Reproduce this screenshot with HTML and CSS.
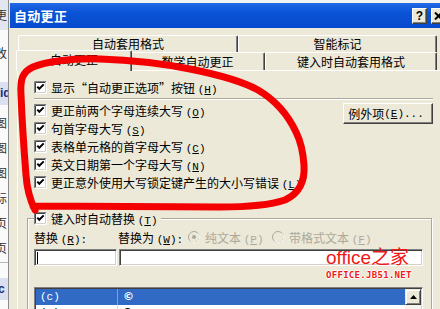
FILE: index.html
```html
<!DOCTYPE html>
<html lang="zh-CN">
<head>
<meta charset="utf-8">
<title>自动更正</title>
<link rel="stylesheet" href="styles.css">
</head>
<body>
<div class="strip">
  <div class="si band-top">更</div>
  <div class="si s2">改</div>
  <div class="si band">id</div>
  <div class="si s-first">图</div>
  <div class="si">图</div>
  <div class="si">图</div>
  <div class="si">标</div>
  <div class="si">页</div>
  <div class="si">页</div>
  <div class="sline"></div>
  <div class="si band band-low">c</div>
</div>

<div class="dialog">
  <div class="titlebar">
    <div class="title">自动更正</div>
    <div class="tbtn">?</div>
    <div class="tbtn"><svg width="9" height="8" viewBox="0 0 9 8"><path d="M1 0.5L8 7.5M8 0.5L1 7.5" stroke="#000" stroke-width="2"/></svg></div>
  </div>
  <div class="dbody">
    <div class="tabs-back">
      <div class="tab w220">自动套用格式</div>
      <div class="tab w199">智能标记</div>
    </div>
    <div class="tabs-front">
      <div class="tab sel">自动更正</div>
      <div class="tab w135">数学自动更正</div>
      <div class="tab w172">键入时自动套用格式</div>
    </div>
    <div class="panel">
      <div class="row">
        <svg class="cb" width="13" height="13" viewBox="0 0 13 13"><rect x="1" y="1" width="11" height="11" fill="#fff"/><path d="M0.5 12.5V0.5H12.5" stroke="#808080" fill="none"/><path d="M1.5 11.5V1.5H11.5" stroke="#404040" fill="none"/><path d="M0.5 12.5H12.5V0.5" stroke="#fff" fill="none"/><path d="M1.5 11.5H11.5V1.5" stroke="#d4d0c8" fill="none"/><path d="M3.3 5.6L5.3 7.8L9.7 3.4" stroke="#000" stroke-width="2" fill="none"/></svg>
        <span>显示“自动更正选项”按钮 <span class="k">(<u>H</u>)</span></span>
      </div>
      <div class="sep"></div>
      <div class="opts">
        <div class="checklist">
          <div class="row">
            <svg class="cb" width="13" height="13" viewBox="0 0 13 13"><rect x="1" y="1" width="11" height="11" fill="#fff"/><path d="M0.5 12.5V0.5H12.5" stroke="#808080" fill="none"/><path d="M1.5 11.5V1.5H11.5" stroke="#404040" fill="none"/><path d="M0.5 12.5H12.5V0.5" stroke="#fff" fill="none"/><path d="M1.5 11.5H11.5V1.5" stroke="#d4d0c8" fill="none"/><path d="M3.3 5.6L5.3 7.8L9.7 3.4" stroke="#000" stroke-width="2" fill="none"/></svg>
            <span>更正前两个字母连续大写 <span class="k">(<u>O</u>)</span></span>
          </div>
          <div class="row">
            <svg class="cb" width="13" height="13" viewBox="0 0 13 13"><rect x="1" y="1" width="11" height="11" fill="#fff"/><path d="M0.5 12.5V0.5H12.5" stroke="#808080" fill="none"/><path d="M1.5 11.5V1.5H11.5" stroke="#404040" fill="none"/><path d="M0.5 12.5H12.5V0.5" stroke="#fff" fill="none"/><path d="M1.5 11.5H11.5V1.5" stroke="#d4d0c8" fill="none"/><path d="M3.3 5.6L5.3 7.8L9.7 3.4" stroke="#000" stroke-width="2" fill="none"/></svg>
            <span>句首字母大写 <span class="k">(<u>S</u>)</span></span>
          </div>
          <div class="row">
            <svg class="cb" width="13" height="13" viewBox="0 0 13 13"><rect x="1" y="1" width="11" height="11" fill="#fff"/><path d="M0.5 12.5V0.5H12.5" stroke="#808080" fill="none"/><path d="M1.5 11.5V1.5H11.5" stroke="#404040" fill="none"/><path d="M0.5 12.5H12.5V0.5" stroke="#fff" fill="none"/><path d="M1.5 11.5H11.5V1.5" stroke="#d4d0c8" fill="none"/><path d="M3.3 5.6L5.3 7.8L9.7 3.4" stroke="#000" stroke-width="2" fill="none"/></svg>
            <span>表格单元格的首字母大写 <span class="k">(<u>C</u>)</span></span>
          </div>
          <div class="row">
            <svg class="cb" width="13" height="13" viewBox="0 0 13 13"><rect x="1" y="1" width="11" height="11" fill="#fff"/><path d="M0.5 12.5V0.5H12.5" stroke="#808080" fill="none"/><path d="M1.5 11.5V1.5H11.5" stroke="#404040" fill="none"/><path d="M0.5 12.5H12.5V0.5" stroke="#fff" fill="none"/><path d="M1.5 11.5H11.5V1.5" stroke="#d4d0c8" fill="none"/><path d="M3.3 5.6L5.3 7.8L9.7 3.4" stroke="#000" stroke-width="2" fill="none"/></svg>
            <span>英文日期第一个字母大写 <span class="k">(<u>N</u>)</span></span>
          </div>
          <div class="row">
            <svg class="cb" width="13" height="13" viewBox="0 0 13 13"><rect x="1" y="1" width="11" height="11" fill="#fff"/><path d="M0.5 12.5V0.5H12.5" stroke="#808080" fill="none"/><path d="M1.5 11.5V1.5H11.5" stroke="#404040" fill="none"/><path d="M0.5 12.5H12.5V0.5" stroke="#fff" fill="none"/><path d="M1.5 11.5H11.5V1.5" stroke="#d4d0c8" fill="none"/><path d="M3.3 5.6L5.3 7.8L9.7 3.4" stroke="#000" stroke-width="2" fill="none"/></svg>
            <span>更正意外使用大写锁定键产生的大小写错误 <span class="k">(<u>L</u>)</span></span>
          </div>
        </div>
        <div class="btn">例外项 <span class="k">(<u>E</u>)...</span></div>
      </div>

      <fieldset class="group">
        <legend class="legend">
          <svg class="cb" width="13" height="13" viewBox="0 0 13 13"><rect x="1" y="1" width="11" height="11" fill="#fff"/><path d="M0.5 12.5V0.5H12.5" stroke="#808080" fill="none"/><path d="M1.5 11.5V1.5H11.5" stroke="#404040" fill="none"/><path d="M0.5 12.5H12.5V0.5" stroke="#fff" fill="none"/><path d="M1.5 11.5H11.5V1.5" stroke="#d4d0c8" fill="none"/><path d="M3.3 5.6L5.3 7.8L9.7 3.4" stroke="#000" stroke-width="2" fill="none"/></svg>
          <span>键入时自动替换 <span class="k">(<u>T</u>)</span></span>
        </legend>
        <div class="labels">
          <span class="lbl1">替换 <span class="k">(<u>R</u>):</span></span>
          <span class="lbl2">替换为 <span class="k">(<u>W</u>):</span></span>
          <span class="rgrp dis">
            <svg width="12" height="12" viewBox="0 0 12 12"><circle cx="6" cy="6" r="5.5" fill="#ece9d8" stroke="#aca899"/><path d="M10 2.5A5 5 0 0 1 2.5 10" stroke="#fff" fill="none"/><circle cx="6" cy="6" r="2" fill="#aca899"/></svg>
            <span>纯文本 <span class="k">(<u>P</u>)</span></span>
          </span>
          <span class="rgrp dis">
            <svg width="12" height="12" viewBox="0 0 12 12"><circle cx="6" cy="6" r="5.5" fill="#ece9d8" stroke="#aca899"/><path d="M10 2.5A5 5 0 0 1 2.5 10" stroke="#fff" fill="none"/></svg>
            <span>带格式文本 <span class="k">(<u>F</u>)</span></span>
          </span>
        </div>
        <div class="inputs">
          <div class="inp w83"><span class="caret"></span></div>
          <div class="inp grow"></div>
        </div>
        <div class="list">
          <div class="lrows">
            <div class="lrow selrow"><span class="c1">(c)</span><span class="c2">©</span></div>
            <div class="lrow"><span class="c1">(e)</span><span class="c2">€</span></div>
            <div class="lrow"><span class="c1">(r)</span><span class="c2">®</span></div>
          </div>
          <div class="scroll">
            <div class="sbtn"><svg width="7" height="4" viewBox="0 0 7 4"><path d="M3.5 0L7 4H0Z" fill="#000"/></svg></div>
            <div class="strack"></div>
          </div>
        </div>
      </fieldset>
    </div>
  </div>
</div>

<div class="wm">
  <div class="wm-main">office之家</div>
  <div class="wm-sub">OFFICE.JB51.NET</div>
</div>

<svg class="ink" width="440" height="309" viewBox="0 0 440 309">
  <path d="M 35 210 C 30 200, 27 190, 26 175 C 24 150, 22 120, 21 95 C 20 80, 22 72, 33 67 C 45 62, 70 58, 100 59 C 130 60, 160 63, 190 69 C 215 74, 240 80, 258 90 C 275 100, 288 115, 296 132 C 300 140, 303 150, 304 165 C 305 180, 300 193, 285 200 C 270 205, 250 207, 220 207 L 33 206" fill="none" stroke="#f40000" stroke-width="7" stroke-linecap="round" stroke-linejoin="round"/>
</svg>
</body>
</html>
```

FILE: styles.css
```css
html, body {
  margin: 0;
  padding: 0;
}
body {
  width: 440px;
  height: 309px;
  overflow: hidden;
  position: relative;
  display: flex;
  align-items: flex-start;
  background: #f3f3f3;
  font-family: "Noto Sans CJK SC", sans-serif;
  font-size: 12px;
  color: #000;
}

/* background window strip */
.strip {
  flex: none;
  width: 8px;
  height: 309px;
  overflow: hidden;
  border-right: 1px solid #8c8c8c;
  background: #fafafa;
  display: flex;
  flex-direction: column;
}
.si {
  flex: none;
  height: 25px;
  line-height: 25px;
  margin-left: -5px;
  white-space: nowrap;
  color: #333;
  font-size: 12px;
}
.band-top {
  height: 30px;
  line-height: 30px;
  background: #e3e6ee;
  padding-left: 0;
}
.s2 {
  margin-top: 14px;
  height: 18px;
  line-height: 18px;
}
.band {
  margin-top: 20px;
  margin-left: 0;
  height: 23px;
  line-height: 23px;
  background: #dbe0f1;
  color: #1c2f7a;
  font-weight: 700;
  font-family: "Liberation Sans", sans-serif;
}
.s-first {
  margin-top: 5px;
}
.sline {
  flex: none;
  margin-top: 2px;
  height: 1px;
  background: #b8b8b8;
}
.band-low {
  margin-top: 15px;
  height: 22px;
  line-height: 22px;
  margin-left: -2px;
}

/* dialog */
.dialog {
  flex: none;
  width: 440px;
  height: 330px;
  margin-top: 3px;
  border-left: 1px solid #ece9d8;
  background: #ece9d8;
}
.titlebar {
  height: 25px;
  display: flex;
  align-items: center;
  padding: 0 4px;
  background: linear-gradient(#226ae6, #0a52d6 40%, #064bcc);
  color: #fff;
}
.title {
  flex: 1;
  font-weight: 700;
  font-size: 13px;
  line-height: 25px;
  letter-spacing: 0.3px;
}
.tbtn {
  flex: none;
  width: 15px;
  height: 16px;
  margin-left: 4px;
  box-sizing: border-box;
  background: #ece9d8;
  border: 1px solid;
  border-color: #fff #404040 #404040 #fff;
  box-shadow: inset -1px -1px 0 #808080;
  display: flex;
  align-items: center;
  justify-content: center;
  color: #000;
  font-family: "Liberation Sans", sans-serif;
  font-weight: 700;
  font-size: 12px;
  line-height: 1;
}

.dbody {
  padding: 7px 4px 0 7px;
}
.tabs-back,
.tabs-front {
  display: flex;
  padding-left: 1px;
}
.tabs-back {
  height: 17px;
}
.tabs-front {
  height: 18px;
  align-items: flex-end;
}
.tab {
  flex: none;
  box-sizing: border-box;
  display: flex;
  align-items: center;
  justify-content: center;
  background: #ece9d8;
  border-top: 1px solid #fff;
  border-left: 1px solid #fff;
  border-right: 1px solid #404040;
  box-shadow: inset -1px 0 0 #808080;
  border-top-left-radius: 2px;
  border-top-right-radius: 2px;
  white-space: nowrap;
  line-height: 16px;
}
.tabs-back .tab { height: 17px; }
.tabs-front .tab { height: 18px; }
.w220 { width: 220px; }
.w199 { width: 199px; }
.w135 { width: 135px; }
.w172 { width: 172px; }
.tabs-front .tab.sel {
  position: relative;
  z-index: 1;
  width: 116px;
  height: 21px;
  margin-left: -2px;
  margin-right: -2px;
  margin-bottom: -1px;
  padding-bottom: 2px;
}

.panel {
  height: 260px;
  border-top: 1px solid #fff;
  border-left: 1px solid #fff;
  border-right: 1px solid #404040;
  padding: 7px 12px 0 16px;
}
.row {
  display: flex;
  align-items: center;
  gap: 4px;
  height: 18px;
  white-space: nowrap;
}
.cb {
  flex: none;
  display: block;
}
.k {
  font-family: "Liberation Mono", monospace;
  font-size: 11px;
}
.sep {
  margin: 2px 0 1px;
  border-top: 1px solid #aca899;
  border-bottom: 1px solid #fff;
}
.opts {
  display: flex;
  justify-content: space-between;
  align-items: flex-start;
}
.btn {
  flex: none;
  margin-top: 2px;
  width: 90px;
  height: 21px;
  box-sizing: border-box;
  border: 1px solid;
  border-color: #fff #404040 #404040 #fff;
  box-shadow: inset -1px -1px 0 #808080;
  display: flex;
  align-items: center;
  justify-content: center;
  white-space: nowrap;
  padding-right: 4px;
}

.group {
  margin: 18px 1px 0 -7px;
  padding: 2px 8px 0 6px;
  min-width: 0;
  border: 1px solid #aca899;
  box-shadow: inset 1px 1px 0 #fff, 1px 1px 0 #fff;
}
.legend {
  display: flex;
  align-items: center;
  gap: 4px;
  height: 18px;
  padding: 0 3px 0 0;
  background: #ece9d8;
  white-space: nowrap;
}
.labels {
  display: flex;
  align-items: center;
  height: 16px;
  white-space: nowrap;
}
.lbl1 { width: 84px; flex: none; }
.lbl2 { width: 70px; flex: none; }
.rgrp {
  flex: none;
  width: 84px;
  display: flex;
  align-items: center;
  gap: 5px;
}
.rgrp svg { flex: none; display: block; }
.dis { color: #aca899; }

.inputs {
  display: flex;
  gap: 2px;
  margin-top: 4px;
  height: 17px;
}
.inp {
  box-sizing: border-box;
  height: 17px;
  background: #fff;
  border: 1px solid;
  border-color: #808080 #fff #fff #808080;
  box-shadow: inset 1px 1px 0 #404040, inset -1px -1px 0 #d4d0c8;
  display: flex;
  align-items: center;
}
.w83 { width: 83px; flex: none; }
.grow { flex: 1; }
.caret {
  width: 1px;
  height: 12px;
  margin-left: 2px;
  background: #000;
}

.list {
  margin-top: 21px;
  height: 80px;
  box-sizing: border-box;
  border: 1px solid;
  border-color: #808080 #fff #fff #808080;
  box-shadow: inset 1px 1px 0 #404040, inset -1px -1px 0 #d4d0c8;
  padding: 1px;
  display: flex;
  background: #fff;
}
.lrows {
  flex: 1;
}
.lrow {
  display: flex;
  height: 16px;
  line-height: 16px;
  font-family: "Liberation Mono", monospace;
  font-size: 11px;
}
.c1 {
  flex: none;
  width: 82px;
  box-sizing: border-box;
  padding-left: 4px;
  border-right: 1px solid #e2e0d6;
}
.c2 {
  padding-left: 5px;
  font-family: "DejaVu Sans", sans-serif;
  font-weight: 700;
}
.selrow {
  background: #316ac5;
  color: #fff;
}
.selrow .c1 { border-right-color: #7d9ede; }
.scroll {
  flex: none;
  width: 16px;
  display: flex;
  flex-direction: column;
}
.sbtn {
  height: 16px;
  box-sizing: border-box;
  background: #ece9d8;
  border: 1px solid;
  border-color: #ece9d8 #404040 #404040 #ece9d8;
  box-shadow: inset 1px 1px 0 #fff, inset -1px -1px 0 #808080;
  display: flex;
  align-items: center;
  justify-content: center;
}
.sbtn svg { display: block; }
.strack {
  flex: 1;
  background: #f4f3ee;
}

/* overlays */
.wm {
  position: absolute;
  left: 326px;
  top: 248px;
  z-index: 3;
}
.wm-main {
  font-family: "Liberation Sans", "Noto Sans CJK SC", sans-serif;
  font-size: 19px;
  line-height: 20px;
  color: #f01818;
  white-space: nowrap;
}
.wm-sub {
  margin-top: 3px;
  font-family: "DejaVu Sans Mono", monospace;
  font-weight: 700;
  font-size: 9px;
  line-height: 9px;
  letter-spacing: 0.3px;
  color: #f01818;
  white-space: nowrap;
  text-shadow: 1px 0 0 #fff, -1px 0 0 #fff, 0 1px 0 #fff, 0 -1px 0 #fff;
}
.ink {
  position: absolute;
  left: 0;
  top: 0;
  z-index: 4;
  pointer-events: none;
}
```
